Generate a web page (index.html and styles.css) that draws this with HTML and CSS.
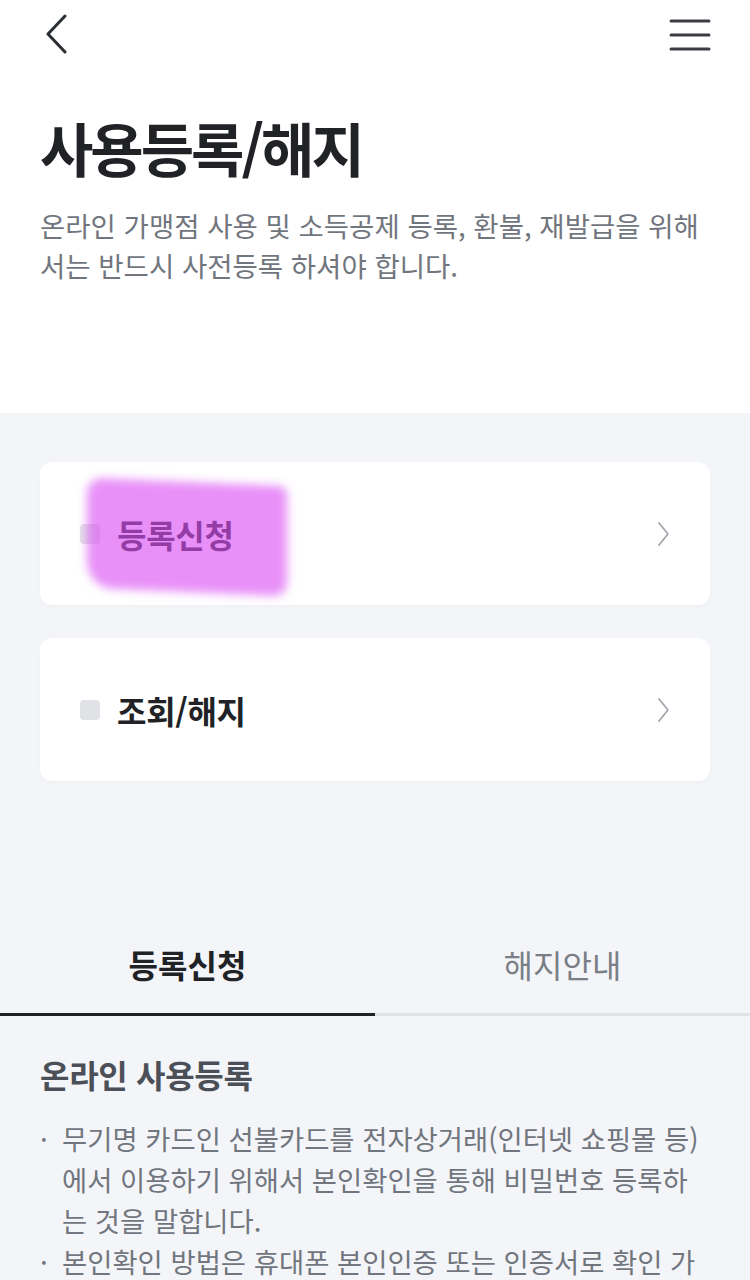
FILE: index.html
```html
<!DOCTYPE html>
<html lang="ko">
<head>
<meta charset="utf-8">
<link rel="stylesheet" href="styles.css">
</head>
<body>
<div class="top">
  <header class="header">
    <svg class="back" width="26" height="40" viewBox="0 0 26 40"><path d="M22 2 L5 20 L22 38" fill="none" stroke="#2a2d33" stroke-width="3" stroke-linecap="round" stroke-linejoin="round"/></svg>
    <svg class="menu" width="42" height="34" viewBox="0 0 42 34"><path d="M2 3 H40 M2 17 H40 M2 31 H40" fill="none" stroke="#3a3d44" stroke-width="3" stroke-linecap="round"/></svg>
  </header>
  <h1 class="title">사용등록/해지</h1>
  <p class="desc">온라인 가맹점 사용 및 소득공제 등록, 환불, 재발급을 위해 서는 반드시 사전등록 하셔야 합니다.</p>
</div>
<main class="gray">
  <div class="cards">
    <a class="card">
      <span class="sq"></span><span class="card-label">등록신청</span>
      <svg class="chev" width="14" height="26" viewBox="0 0 14 26"><path d="M2 2 L11 13 L2 24" fill="none" stroke="#a4a7ad" stroke-width="1.8" stroke-linecap="round" stroke-linejoin="round"/></svg>
      <span class="mark"></span>
    </a>
    <a class="card">
      <span class="sq"></span><span class="card-label">조회/해지</span>
      <svg class="chev" width="14" height="26" viewBox="0 0 14 26"><path d="M2 2 L11 13 L2 24" fill="none" stroke="#a4a7ad" stroke-width="1.8" stroke-linecap="round" stroke-linejoin="round"/></svg>
    </a>
  </div>
  <nav class="tabs">
    <div class="tab active">등록신청</div>
    <div class="tab">해지안내</div>
  </nav>
  <section class="info">
    <h2 class="info-title">온라인 사용등록</h2>
    <ul class="list">
      <li>무기명 카드인 선불카드를 전자상거래(인터넷 쇼핑몰 등)에서 이용하기 위해서 본인확인을 통해 비밀번호 등록하는 것을 말합니다.</li>
      <li>본인확인 방법은 휴대폰 본인인증 또는 인증서로 확인 가능합니다.</li>
    </ul>
  </section>
</main>
</body>
</html>
```
FILE: styles.css
```css
* { box-sizing: border-box; }
html, body { margin: 0; padding: 0; }
body {
  width: 750px;
  font-family: "Noto Sans CJK KR", "Noto Sans", sans-serif;
  background: #f4f5f9;
  overflow: hidden;
  height: 1280px;
}
.top {
  background: #fff;
  height: 413px;
  padding: 0 40px;
}
.header {
  height: 72px;
  display: flex;
  justify-content: space-between;
  align-items: center;
}
.back { margin-left: 3px; margin-top: -4px; }
.menu { margin-right: -1px; margin-top: -2px; }
.title {
  margin: 37px 0 0;
  font-size: 58px;
  font-weight: 700;
  letter-spacing: -3px;
  line-height: 76px;
  color: #202226;
}
.desc {
  margin: 20px 0 0;
  font-size: 27.5px;
  line-height: 40px;
  letter-spacing: 0;
  color: #71767e;
  padding-right: 8px;
}
.gray { padding-top: 49px; }
.cards {
  padding: 0 40px;
  display: flex;
  flex-direction: column;
  gap: 33px;
}
.card {
  position: relative;
  height: 143px;
  background: #fff;
  border-radius: 12px;
  display: flex;
  align-items: center;
  padding: 0 40px;
  box-shadow: 0 2px 6px rgba(0,0,0,0.02);
}
.sq {
  width: 20px;
  height: 20px;
  border-radius: 4px;
  background: #e1e2e6;
  margin-right: 17px;
}
.card-label {
  font-size: 32px;
  font-weight: 700;
  color: #202226;
  letter-spacing: -0.3px;
  flex: 1;
}
.chev { margin-right: -1px; }
.mark {
  position: absolute;
  left: 47px;
  top: 20px;
  width: 200px;
  height: 110px;
  background: rgba(218, 76, 243, 0.62);
  border-radius: 16px 8px 14px 26px;
  filter: blur(5px);
  transform: skewY(2.5deg);
}
.tabs {
  margin-top: 146px;
  display: flex;
}
.tab {
  flex: 1;
  text-align: center;
  font-size: 32px;
  line-height: 44px;
  padding: 15px 0 27px;
  color: #7a7f87;
  border-bottom: 3px solid #e2e3e7;
}
.tab.active {
  font-weight: 700;
  color: #202226;
  border-bottom-color: #202226;
}
.info { padding: 0 40px; }
.info-title {
  margin: 36px 0 0;
  font-size: 32px;
  font-weight: 700;
  line-height: 44px;
  color: #4b5058;
  letter-spacing: -0.3px;
}
.list {
  list-style: none;
  margin: 22px 0 0;
  padding: 0;
}
.list li {
  position: relative;
  padding-left: 22px;
  font-size: 27.4px;
  line-height: 41px;
  letter-spacing: 0;
  color: #71767e;
  padding-right: 0;
}
.list li::before {
  content: "·";
  position: absolute;
  left: 0;
  top: 0;
}
```
